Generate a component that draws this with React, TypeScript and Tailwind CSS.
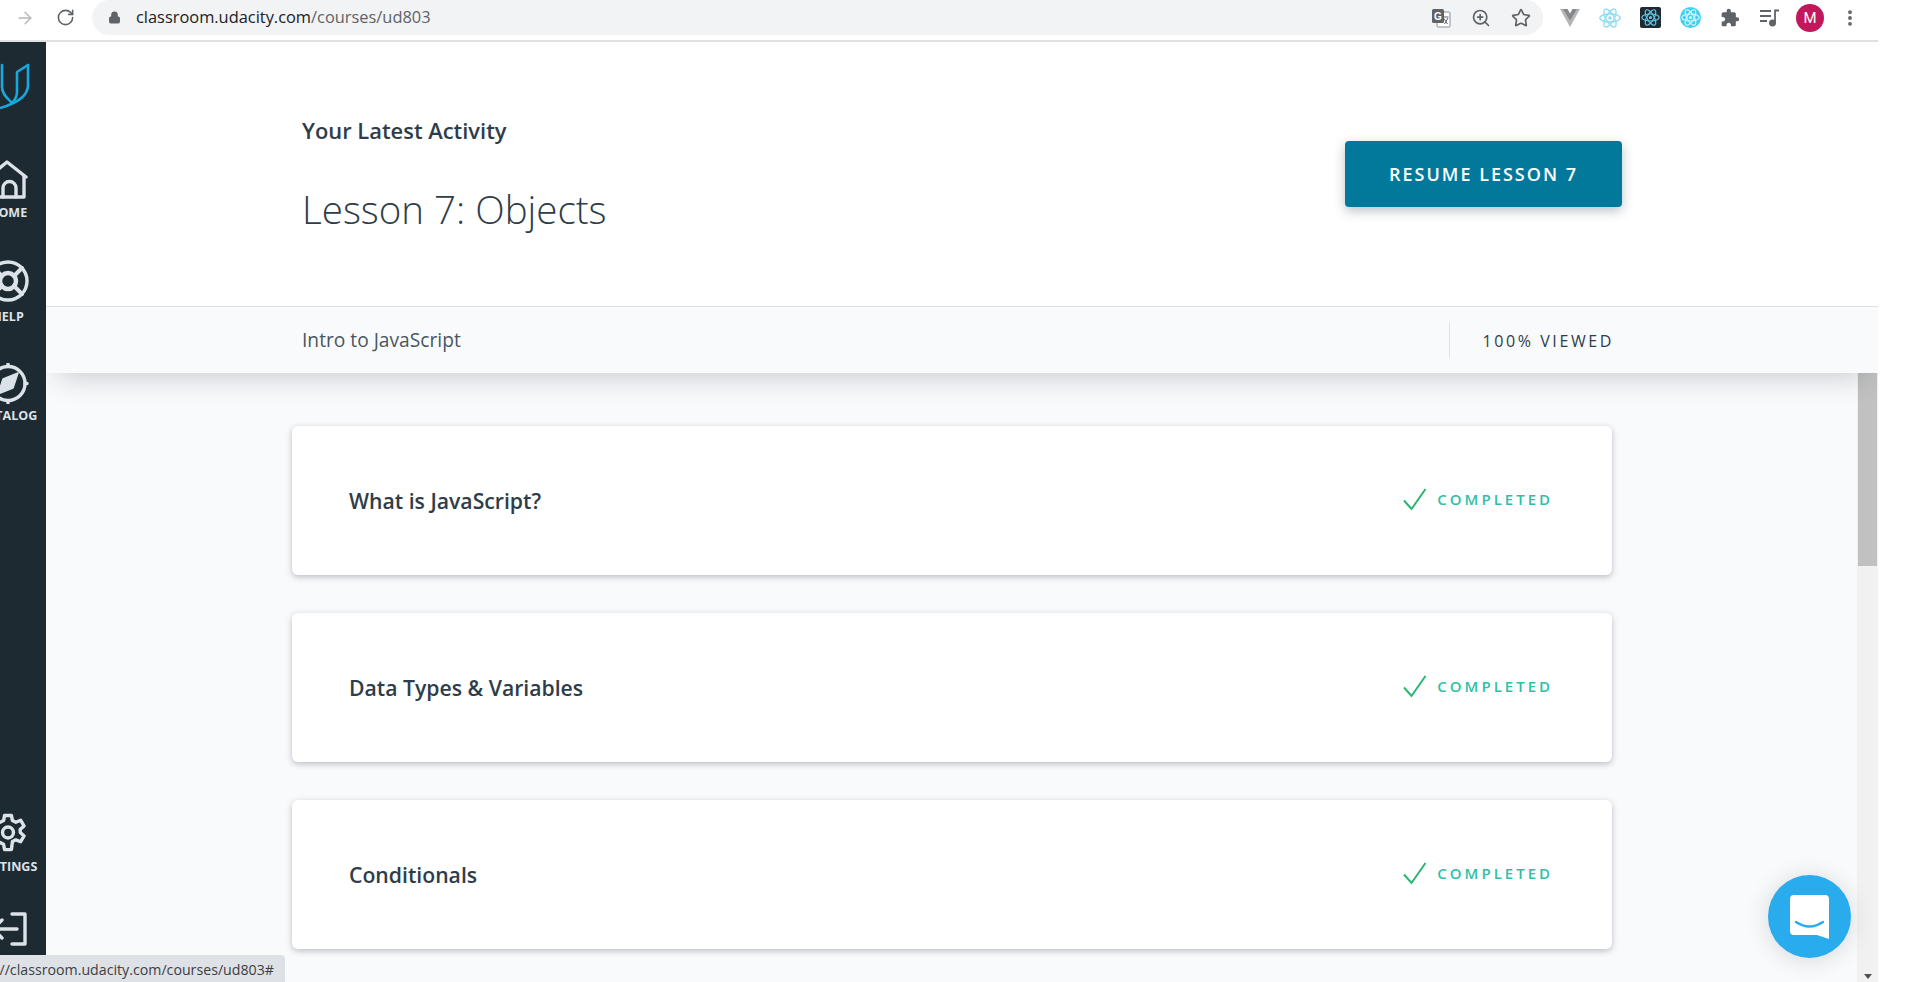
import { Lock, RotateCw, ArrowRight, ZoomIn, Star, EllipsisVertical } from "lucide-react";

const lessons = ["What is JavaScript?", "Data Types & Variables", "Conditionals"];

function ReactLogo({ color, size = 24 }: { color: string; size?: number }) {
  return (
    <svg width={size} height={size} viewBox="0 0 24 24" fill="none" stroke={color} strokeWidth="1.5">
      <ellipse cx="12" cy="12" rx="11" ry="4.4" />
      <ellipse cx="12" cy="12" rx="11" ry="4.4" transform="rotate(60 12 12)" />
      <ellipse cx="12" cy="12" rx="11" ry="4.4" transform="rotate(120 12 12)" />
      <circle cx="12" cy="12" r="2" fill={color} stroke="none" />
    </svg>
  );
}

function Slot({ children }: { children: React.ReactNode }) {
  return <div className="w-[40px] h-[35px] flex items-center justify-center shrink-0">{children}</div>;
}

function Toolbar() {
  return (
    <div className="h-[42px] flex items-start border-b-2 border-[#dfe0e2] mr-[42px] shrink-0 bg-white">
      <div className="h-[35px] flex items-center pl-[15px]">
        <ArrowRight className="w-[20px] h-[20px] text-[#b4b6b9]" strokeWidth={1.6} />
        <RotateCw className="w-[19px] h-[19px] ml-[21px] text-[#5f6368]" strokeWidth={2} />
      </div>
      <div className="flex-1 h-[35px] ml-[17px] bg-[#f1f3f4] rounded-full flex items-center pl-[16px] pr-[2px]">
        <Lock className="w-[13px] h-[13px] text-[#5f6368]" fill="#5f6368" />
        <span className="ml-[15px] text-[16.4px] text-[#202124] font-['Open_Sans',sans-serif]">
          classroom.udacity.com<span className="text-[#5f6368]">/courses/ud803</span>
        </span>
        <div className="ml-auto flex items-center">
          <Slot>
            <svg width="20" height="20" viewBox="0 0 20 20">
              <rect x="6" y="4" width="13" height="15" rx="1" fill="#fff" stroke="#8b8e92" />
              <rect x="1" y="1" width="12" height="14" rx="1.5" fill="#5f6368" />
              <text x="3" y="12" fontSize="10" fontWeight="700" fill="#fff" fontFamily="Liberation Sans, sans-serif">G</text>
              <path d="M12.5 9h5M13.5 16l3.5-6M13 10.5l3.500 5.500" stroke="#5f6368" fill="none" />
            </svg>
          </Slot>
          <Slot>
            <ZoomIn className="w-[20px] h-[20px] text-[#5f6368]" strokeWidth={2} />
          </Slot>
          <Slot>
            <Star className="w-[20px] h-[20px] text-[#5f6368]" strokeWidth={2} />
          </Slot>
        </div>
      </div>
      <div className="flex items-center ml-[7px] mr-[8px] shrink-0">
        <Slot>
          <svg width="20" height="18" viewBox="0 0 20 18">
            <path d="M0 0h6l4 7 4-7h6L10 18z" fill="#b4b5b7" />
            <path d="M3 0h4.500L10 4.500 12.500 0H17l-7 11.500z" fill="#858789" />
          </svg>
        </Slot>
        <Slot>
          <ReactLogo color="#8fdcf2" size={22} />
        </Slot>
        <Slot>
          <div className="w-[21px] h-[21px] bg-[#1f2a33] rounded-[2px] flex items-center justify-center">
            <ReactLogo color="#61c9e8" size={19} />
          </div>
        </Slot>
        <Slot>
          <div className="w-[21px] h-[21px] bg-[#3fd0f0] rounded-full flex items-center justify-center">
            <ReactLogo color="#d6f6fd" size={19} />
          </div>
        </Slot>
        <Slot>
          <svg width="20" height="20" viewBox="0 0 24 24" fill="#5f6368">
            <path d="M20.500 11H19V7c0-1.100-.9-2-2-2h-4V3.500C13 2.120 11.880 1 10.500 1S8 2.120 8 3.500V5H4c-1.100 0-1.990.9-1.990 2v3.800H3.500c1.490 0 2.700 1.210 2.700 2.700s-1.210 2.700-2.700 2.700H2V20c0 1.100.9 2 2 2h3.800v-1.500c0-1.490 1.210-2.700 2.700-2.700 1.490 0 2.700 1.210 2.700 2.700V22H17c1.100 0 2-.9 2-2v-4h1.500c1.380 0 2.500-1.120 2.500-2.500S21.880 11 20.500 11z" />
          </svg>
        </Slot>
        <Slot>
          <svg width="20" height="18" viewBox="0 0 20 18" fill="none" stroke="#5f6368" strokeWidth="1.800">
            <path d="M0 2h11M0 7h11M0 12h7" />
            <path d="M15 14V1.500h4" />
            <circle cx="12.500" cy="14" r="2.600" fill="#5f6368" />
          </svg>
        </Slot>
        <Slot>
          <div className="w-[28px] h-[28px] mt-[1px] rounded-full bg-[#c2185b] text-white text-[15px] flex items-center justify-center font-['Roboto',sans-serif]">
            M
          </div>
        </Slot>
        <Slot>
          <EllipsisVertical className="w-[20px] h-[20px] text-[#5f6368]" strokeWidth={2.6} />
        </Slot>
      </div>
    </div>
  );
}

function NavLabel({ text, className }: { text: string; className: string }) {
  return <span className={`text-[12.500px] leading-[16px] font-bold text-[#dbe2e8] ${className}`}>{text}</span>;
}

function Sidebar() {
  const stroke = { fill: "none", stroke: "#dbe2e8", strokeWidth: 3.4, strokeLinejoin: "round" as const, strokeLinecap: "round" as const };
  return (
    <div className="w-[46px] shrink-0 bg-[#1e2a32] overflow-hidden flex flex-col font-['Open_Sans',sans-serif]">
      <div className="-ml-[30px] w-[76px] flex flex-col items-center">
        <div className="h-[118px] pt-[21px]">
          <svg width="46" height="46" viewBox="0 0 46 46" fill="none" stroke="#18a9dc" strokeWidth="2.600" strokeLinejoin="round" strokeLinecap="round">
            <path d="M43 2 32 9v20c0 5-2 8-5 11" />
            <path d="M43 2v20c0 11-10 18-28 23" />
            <path d="M17 2v22c0 7 5 11 9 15" />
          </svg>
        </div>
        <div className="h-[100px] flex flex-col items-center">
          <svg width="40" height="39" viewBox="0 0 40 39" {...stroke}>
            <path d="M1 17 19 2l19 15" />
            <path d="M3 16v21h33V16" />
            <path d="M15 37V28a6.500 6.500 0 0 1 13 0v9" />
          </svg>
          <NavLabel text="HOME" className="mt-[6px]" />
        </div>
        <div className="h-[103px] flex flex-col items-center">
          <svg width="42" height="42" viewBox="0 0 42 42" {...stroke}>
            <circle cx="21" cy="21" r="19" />
            <circle cx="21" cy="21" r="8" strokeWidth="4.500" />
            <path d="m7 8 8 8M35 8l-8 8M7 34l8-8M35 34l-8-8" strokeWidth="4" />
          </svg>
          <NavLabel text="HELP" className="mt-[7px]" />
        </div>
        <div className="flex flex-col items-center">
          <svg width="42" height="41" viewBox="0 0 42 41" {...stroke}>
            <circle cx="21" cy="20.500" r="17" />
            <path d="M31 10 16 16 11 31 26 25z" fill="#dbe2e8" strokeWidth="1.500" />
            <path d="M21 1v2M21 38v2M2 20.500h2M38 20.500h2" />
          </svg>
          <NavLabel text="CATALOG" className="mt-[4px]" />
        </div>
      </div>
      <div className="mt-auto -ml-[30px] w-[76px] flex flex-col items-center">
        <div className="h-[100px] flex flex-col items-center">
          <svg width="42" height="41" viewBox="0 0 24 24" fill="none" stroke="#dbe2e8" strokeWidth="2" strokeLinejoin="round">
            <path d="M10 2h4l.6 3 2 1 2.800-1.200 2 3.400-2.300 2 .1 1.800 2.200 2-2 3.400-2.800-1.100-2 1L14 22h-4l-.6-3.100-2-1-2.800 1.100-2-3.400 2.300-2-.1-1.800-2.200-2 2-3.400L7.400 6l2-1z" />
            <circle cx="12" cy="12" r="3.200" />
          </svg>
          <NavLabel text="SETTINGS" className="mt-[6px]" />
        </div>
        <div className="h-[70px]">
          <svg width="40" height="34" viewBox="0 0 40 34" {...stroke}>
            <path d="M24 2h13v30H24" />
            <path d="M29 17H5M14 8l-9 9 9 9" />
          </svg>
        </div>
      </div>
    </div>
  );
}

function LessonCard({ title }: { title: string }) {
  return (
    <div className="h-[149px] shrink-0 bg-white rounded-[6px] shadow-[0_2px_6px_rgba(40,50,60,0.3)] flex items-center pl-[57px] pr-[59px]">
      <span className="text-[21.200px] font-semibold text-[#2e3d49]">{title}</span>
      <div className="ml-auto flex items-center -mt-[3px]">
        <svg width="26" height="26" viewBox="0 0 26 26" fill="none" stroke="#2bb573" strokeWidth="2" className="mr-[9px]">
          <path d="M2 14.500 9.500 23 23.500 3" />
        </svg>
        <span className="text-[15px] leading-[20px] font-semibold tracking-[3px] text-[#2ebfa8] -mt-[1px]">COMPLETED</span>
      </div>
    </div>
  );
}

export default function App() {
  return (
    <div className="relative w-[1920px] h-[982px] overflow-hidden bg-white flex flex-col font-['Open_Sans',sans-serif]">
      <Toolbar />
      <div className="flex flex-1 min-h-0 mr-[42px]">
        <Sidebar />
        <div className="flex-1 flex flex-col min-w-0 overflow-hidden">
          {/* Latest activity header */}
          <div className="h-[265px] shrink-0 bg-white border-b border-[#dee2e7] flex items-start pl-[256px] pr-[256px]">
            <div className="pt-[75px]">
              <div className="text-[21.900px] leading-[28px] font-semibold text-[#2e3d49]">Your Latest Activity</div>
              <div className="mt-[38px] text-[38.500px] leading-[52px] font-light text-[#2e3d49]">Lesson 7: Objects</div>
            </div>
            <button className="ml-auto mt-[99px] w-[277px] h-[66px] rounded-[4px] bg-[#02799b] text-white text-[18px] font-semibold tracking-[2px] shadow-[0_4px_12px_rgba(30,50,70,0.3)]">
              RESUME LESSON 7
            </button>
          </div>
          <div className="h-[66px] shrink-0 bg-[#f9fafc] flex items-center pl-[256px] pr-[264px] relative z-10 shadow-[0_16px_28px_-12px_rgba(30,40,50,0.22)]">
            <span className="text-[19.200px] text-[#4a5660]">Intro to JavaScript</span>
            <div className="ml-auto h-[36px] border-l border-[#dee2e7] pl-[32px] pr-[0px] flex items-center">
              <span className="text-[16px] font-normal tracking-[2.600px] text-[#2e3d49] pt-[2px]">100% VIEWED</span>
            </div>
          </div>
          <div className="flex-1 min-h-0 flex overflow-hidden bg-[#f9fafc]">
            <div className="flex-1 pl-[246px] pr-[245px] pt-[53px] flex flex-col gap-[38px]">
              {lessons.map((title) => (
                <LessonCard key={title} title={title} />
              ))}
            </div>
            <div className="w-[21px] shrink-0 bg-[#f1f1f1] flex flex-col items-center">
              <div className="w-[19px] h-[193px] bg-[#c1c1c1]" />
              <div className="mt-auto mb-[3px] w-0 h-0 border-x-[4px] border-x-transparent border-t-[5px] border-t-[#505050]" />
            </div>
          </div>
        </div>
      </div>

      {/* Status bubble */}
      <div className="absolute left-0 bottom-0 h-[27px] w-[285px] bg-[#dee1e6] rounded-tr-[4px] flex items-center justify-end pr-[11px] pt-[2px] text-[14.200px] text-[#3c4043] whitespace-nowrap overflow-hidden">
        //classroom.udacity.com/courses/ud803#
      </div>

      {/* Chat launcher */}
      <div className="absolute left-[1768px] top-[875px] w-[83px] h-[83px] rounded-full bg-[#29aced] shadow-[0_2px_24px_rgba(0,0,0,0.14)] flex items-center justify-center">
        <svg width="39" height="44" viewBox="0 0 39 44">
          <path d="M4 0h31a4 4 0 0 1 4 4v40l-12-4H4a4 4 0 0 1-4-4V4a4 4 0 0 1 4-4z" fill="#fff" />
          <path d="M6 27q13.500 9 27 0" fill="none" stroke="#29aced" strokeWidth="2.400" strokeLinecap="round" />
        </svg>
      </div>
    </div>
  );
}
